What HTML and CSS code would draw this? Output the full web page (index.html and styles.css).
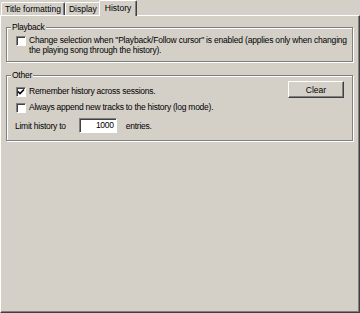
FILE: index.html
```html
<!DOCTYPE html>
<html>
<head>
    <title>History</title>
    <link rel="stylesheet" href="styles.css">
</head>
<body>
    <div class="dialog">
        <div class="tabs">
            <div class="tab">Title formatting</div>
            <div class="tab">Display</div>
            <div class="tab active">History</div>
        </div>
        <div class="panel">
            <fieldset class="group playback">
                <legend>Playback</legend>
                <div class="check">
                    <span class="box"></span>
                    <span class="text">Change selection when "Playback/Follow cursor" is enabled (applies only when changing<br>the playing song through the history).</span>
                </div>
            </fieldset>

            <fieldset class="group other">
                <legend>Other</legend>
                <div class="row">
                    <div class="check">
                        <span class="box">
                            <svg width="8" height="8" viewBox="0 0 8 8"><path d="M1 3.5 L3 5.5 L7 1.5" fill="none" stroke="#000" stroke-width="1.6"/></svg>
                        </span>
                        <span class="text">Remember history across sessions.</span>
                    </div>
                    <button class="btn">Clear</button>
                </div>
                <div class="check second">
                    <span class="box"></span>
                    <span class="text">Always append new tracks to the history (log mode).</span>
                </div>
                <div class="limit">
                    <span>Limit history to</span>
                    <span class="field">1000</span>
                    <span>entries.</span>
                </div>
            </fieldset>
        </div>
    </div>
</body>
</html>
```

FILE: styles.css
```css
html, body {
    margin: 0;
    padding: 0;
    background-color: #d4d0c8;
}
body {
    font-family: "Liberation Sans", Arial, sans-serif;
    font-size: 8.5px;
    letter-spacing: -0.25px;
    color: #000;
    width: 360px;
    height: 313px;
    overflow: hidden;
}
.dialog {
    display: flex;
    flex-direction: column;
    height: 313px;
}
.tabs {
    display: flex;
    align-items: flex-end;
    height: 15px;
    padding-left: 1px;
}
.tab {
    height: 12px;
    line-height: 12px;
    padding: 0 3px 0 3px;
    letter-spacing: 0;
    border-top: 1px solid #fff;
    border-left: 1px solid #fff;
    border-right: 1px solid #404040;
    box-shadow: inset -1px 0 #808080;
    border-radius: 2px 2px 0 0;
    white-space: nowrap;
}
.tab.active {
    position: relative;
    z-index: 1;
    height: 15px;
    line-height: 14px;
    margin: 0 -2px -1px -2px;
    padding: 0 5px 0 5px;
    background-color: #d4d0c8;
}
.panel {
    flex: 1;
    border-top: 1px solid #fff;
    border-left: 1px solid #fff;
    border-right: 1px solid #404040;
    border-bottom: 1px solid #404040;
    box-shadow: inset -1px -1px #808080;
    padding: 5px 6px 0 5px;
}
.group {
    margin: 0;
    padding: 0 0 6px 9px;
    border: 1px solid #808080;
    box-shadow: inset 1px 1px #fff, 1px 1px #fff;
    min-width: 0;
}
.group legend {
    padding: 0 1px;
    margin-left: -5px;
    height: 12px;
    line-height: 12px;
    background-color: #d4d0c8;
}
.other {
    margin-top: 7px;
    padding-bottom: 7px;
}
.check {
    display: flex;
    align-items: flex-start;
    gap: 3px;
}
.check .text {
    line-height: 10px;
    white-space: nowrap;
}
.playback .text {
    letter-spacing: -0.2px;
}
.box {
    flex: none;
    width: 8px;
    height: 8px;
    margin-top: 1px;
    background-color: #fff;
    border-top: 1px solid #808080;
    border-left: 1px solid #808080;
    border-right: 1px solid #fff;
    border-bottom: 1px solid #fff;
    box-shadow: inset 1px 1px #404040;
    display: flex;
    align-items: center;
    justify-content: center;
}
.playback .check {
    margin-top: 2px;
}
.row {
    display: flex;
    align-items: flex-start;
    justify-content: space-between;
    padding-right: 8px;
}
.row .check {
    margin-top: 5px;
}
.btn {
    font: inherit;
    letter-spacing: 0;
    color: #000;
    width: 56px;
    height: 17px;
    padding: 0;
    background-color: #d4d0c8;
    border-top: 1px solid #fff;
    border-left: 1px solid #fff;
    border-right: 1px solid #404040;
    border-bottom: 1px solid #404040;
    box-shadow: inset -1px -1px #808080;
}
.second {
    margin-top: 4px;
}
.limit {
    display: flex;
    align-items: center;
    margin-top: 5px;
    margin-left: -1px;
}
.field {
    width: 34px;
    height: 13px;
    line-height: 13px;
    margin: 0 9px 0 13px;
    padding-right: 2px;
    text-align: right;
    background-color: #fff;
    border-top: 1px solid #808080;
    border-left: 1px solid #808080;
    border-right: 1px solid #fff;
    border-bottom: 1px solid #fff;
    box-shadow: inset 1px 1px #404040;
}
```
